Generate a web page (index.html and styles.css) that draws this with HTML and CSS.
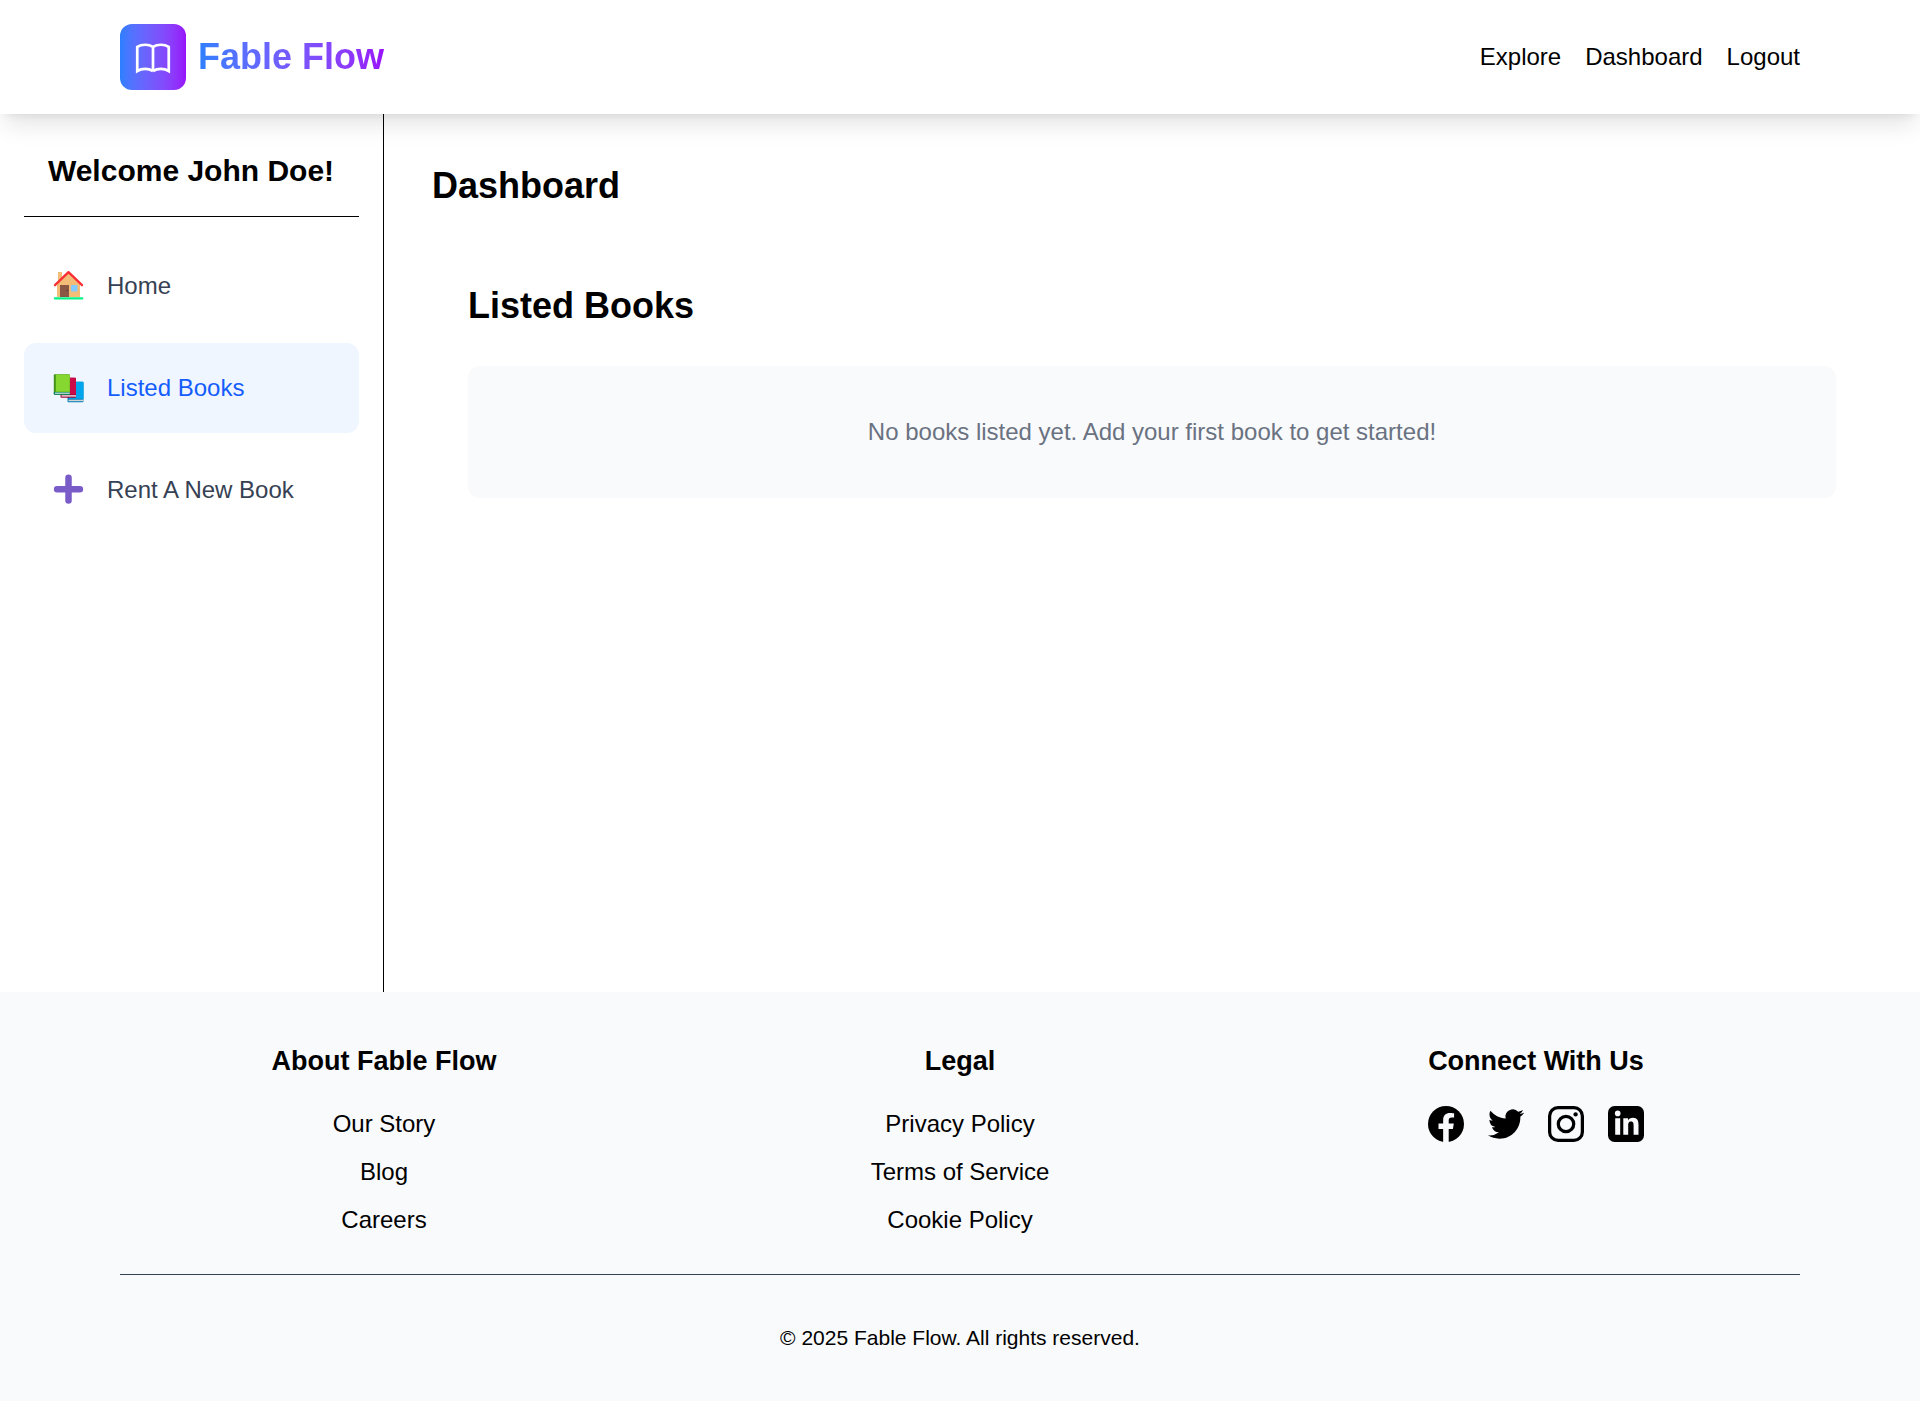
FILE: index.html
```html
<!DOCTYPE html>
<html lang="en">
<head>
<meta charset="utf-8">
<title>Fable Flow</title>
<link rel="stylesheet" href="styles.css">
</head>
<body>
<header class="header">
  <a class="brand">
    <span class="brand-mark">
      <svg width="42" height="42" viewBox="0 0 24 24" fill="none" stroke="#fff" stroke-width="1.55"><path d="M12 6.253v13.800m0-13.800C10.832 5.477 9.246 5 7.500 5S4.168 5.477 3 6.253v13.800C4.168 19.277 5.754 18.800 7.500 18.800s3.332.477 4.500 1.253m0-13.800C13.168 5.477 14.754 5 16.500 5c1.747 0 3.332.477 4.500 1.253v13.800C19.832 19.277 18.247 18.800 16.500 18.800c-1.746 0-3.332.477-4.500 1.253"/></svg>
    </span>
    <span class="brand-name">Fable Flow</span>
  </a>
  <nav class="nav"><a>Explore</a><a>Dashboard</a><a>Logout</a></nav>
</header>

<div class="layout">
  <aside class="sidebar">
    <h2 class="welcome">Welcome John Doe!</h2>
    <ul class="menu">
      <li class="menu-item">
        <svg class="menu-icon" viewBox="0 1 41 30">
          <path fill="#f3bd78" d="M10 2h4v5L20.500 1.500 32 12v15H9V12l1-1z"/>
          <path fill="#8b5745" d="M12 15h9v12h-9z"/><circle cx="19.300" cy="20.500" r=".8" fill="#5c3529"/>
          <rect x="23" y="15" width="6.500" height="6.500" rx=".8" fill="#83cbff"/>
          <path fill="none" stroke="#f92f36" stroke-width="2.300" stroke-linecap="round" stroke-linejoin="round" d="M7 15.200 20.500 2.200 34 15.200"/>
          <rect x="5.800" y="27.200" width="29.500" height="2.200" rx="1" fill="#06f287"/>
        </svg>
        <span>Home</span>
      </li>
      <li class="menu-item active">
        <svg class="menu-icon" viewBox="0 -.7 41 30">
          <rect x="19.500" y="8" width="16" height="20.500" rx="1" fill="#0381b8"/><path fill="#00a6ed" d="M21 8h13.500a1 1 0 0 1 1 1v16H21z"/><path fill="#d3d3d3" d="M20.500 26h15v1.500h-15z"/>
          <rect x="12.500" y="4" width="15.500" height="20" rx="1" fill="#990838"/><path fill="#ca0b4a" d="M14 4h13a1 1 0 0 1 1 1v15.500H14z"/><path fill="#f3dfe5" d="M13.500 21.500h14.500v1.400h-14.500z"/>
          <rect x="5.800" y=".5" width="16" height="20.500" rx="1" fill="#44911b"/><path fill="#86d72f" d="M7.800.7h13a1 1 0 0 1 1 1V18h-14z"/><path fill="#008463" d="M5.800 18.300h16v2.700h-15a1 1 0 0 1-1-1z"/><path fill="#d3e5df" d="M7 18.900h14.800v1.200H7z"/>
        </svg>
        <span>Listed Books</span>
      </li>
      <li class="menu-item">
        <svg class="menu-icon" viewBox="0 1 41 30"><path fill="none" stroke="#7a5cc9" stroke-width="6.500" stroke-linecap="round" d="M20.500 3.800v22.800M9.100 15.200h22.800"/></svg>
        <span>Rent A New Book</span>
      </li>
    </ul>
  </aside>
  <main class="main">
    <h1 class="heading">Dashboard</h1>
    <section class="panel">
      <h2 class="heading">Listed Books</h2>
      <p class="empty">No books listed yet. Add your first book to get started!</p>
    </section>
  </main>
</div>

<footer class="footer">
  <div class="footer-grid">
    <div><h3>About Fable Flow</h3><ul class="links"><li>Our Story</li><li>Blog</li><li>Careers</li></ul></div>
    <div><h3>Legal</h3><ul class="links"><li>Privacy Policy</li><li>Terms of Service</li><li>Cookie Policy</li></ul></div>
    <div>
      <h3>Connect With Us</h3>
      <div class="social">
        <svg viewBox="0 0 24 24"><circle cx="12" cy="12" r="12"/><path fill="#f9fafb" d="M10.100 24v-8.600H7V11.700h3.100V9.300c0-3.100 1.800-4.700 4.600-4.700 1.300 0 2.700.2 2.700.2v2.900h-1.600c-1.500 0-2 .9-2 1.900v2.100h3.400l-.6 3.700h-2.800V24z"/></svg>
        <svg viewBox="0 0 24 24"><path d="M23.953 4.570a10 10 0 01-2.825.775 4.958 4.958 0 002.163-2.723c-.951.555-2.005.959-3.127 1.184a4.920 4.920 0 00-8.384 4.482C7.690 8.095 4.067 6.130 1.640 3.162a4.822 4.822 0 00-.666 2.475c0 1.710.870 3.213 2.188 4.096a4.904 4.904 0 01-2.228-.616v.060a4.923 4.923 0 003.946 4.827 4.996 4.996 0 01-2.212.085 4.936 4.936 0 004.604 3.417 9.867 9.867 0 01-6.102 2.105c-.390 0-.779-.023-1.170-.067a13.995 13.995 0 007.557 2.209c9.053 0 13.998-7.496 13.998-13.985 0-.210 0-.420-.015-.630A9.935 9.935 0 0024 4.590z"/></svg>
        <svg viewBox="0 0 24 24"><rect x="1.080" y="1.080" width="21.840" height="21.840" rx="5.600" fill="none" stroke="#000" stroke-width="2.160"/><circle cx="12" cy="12" r="5.150" fill="none" stroke="#000" stroke-width="2.160"/><circle cx="18.400" cy="5.600" r="1.440"/></svg>
        <svg viewBox="0 0 36 36"><rect width="36" height="36" rx="6.500"/><g fill="#f9fafb"><circle cx="9.700" cy="7.400" r="2.800"/><path d="M7.200 12.200h5v16.600h-5zM15.300 12.200H20v2.200c.8-1.500 2.500-2.600 4.900-2.600 4.500 0 5.600 3 5.600 7v10h-4.900v-8.900c0-2.100-.1-4.300-2.600-4.300s-2.800 2-2.800 4.100v9.100h-4.900z"/></g></svg>
      </div>
    </div>
  </div>
  <p class="copyright">© 2025 Fable Flow. All rights reserved.</p>
</footer>
</body>
</html>
```
FILE: styles.css
```css
* { box-sizing: border-box; margin: 0; padding: 0; }
body {
  min-height: 100vh;
  display: flex;
  flex-direction: column;
  background: #fff;
  color: #000;
  font: 24px/36px "Liberation Sans", Arial, sans-serif;
}
ul { list-style: none; }
svg { display: block; flex: none; }

.header {
  position: relative;
  z-index: 1;
  display: flex;
  justify-content: space-between;
  align-items: center;
  height: 114px;
  padding: 24px 120px;
  background: #fff;
  box-shadow: 0 15px 22.5px -4.5px rgba(0, 0, 0, .1), 0 6px 9px -6px rgba(0, 0, 0, .1);
}
.brand { display: flex; align-items: center; gap: 12px; }
.brand-mark {
  padding: 12px;
  border-radius: 12px;
  background: linear-gradient(to right in oklab, #2b7fff, #9810fa);
}
.brand-name {
  font-size: 36px;
  line-height: 48px;
  font-weight: 700;
  color: transparent;
  background: linear-gradient(to right in oklab, #2b7fff, #9810fa);
  background-clip: text;
}
.nav { display: flex; gap: 24px; }

.layout { display: flex; flex: 1; }
.sidebar { width: 384px; padding: 36px 24px 24px; border-right: 1px solid #000; }
.welcome {
  padding: 0 1px 24px 0;
  border-bottom: 1px solid #000;
  font-size: 30px;
  line-height: 42px;
  text-align: center;
}
.menu { display: flex; flex-direction: column; gap: 12px; padding-top: 24px; }
.menu-item {
  display: flex;
  align-items: center;
  gap: 18px;
  height: 90px;
  padding: 24px;
  border-radius: 12px;
  color: #364153;
}
.menu-item.active { background: #eff6ff; color: #155dfc; }
.menu-icon { width: 41px; height: 30px; overflow: visible; }

.main { flex: 1; padding: 48px; }
.heading { font-size: 36px; line-height: 48px; }
.panel { margin-top: 36px; padding: 36px; }
.empty {
  margin-top: 36px;
  padding: 48px;
  border-radius: 12px;
  background: #f9fafb;
  color: #6a7282;
  text-align: center;
}

.footer { padding: 48px 120px; background: #f9fafb; text-align: center; }
.footer-grid { display: grid; grid-template-columns: repeat(3, 1fr); gap: 48px; }
.footer h3 { margin-bottom: 24px; font-size: 27px; line-height: 42px; }
.links { display: flex; flex-direction: column; gap: 12px; }
.social { display: flex; justify-content: center; gap: 24px; }
.social svg { width: 36px; height: 36px; }
.copyright {
  margin-top: 36px;
  padding-top: 48px;
  border-top: 1px solid #364153;
  font-size: 21px;
  line-height: 30px;
}
```
